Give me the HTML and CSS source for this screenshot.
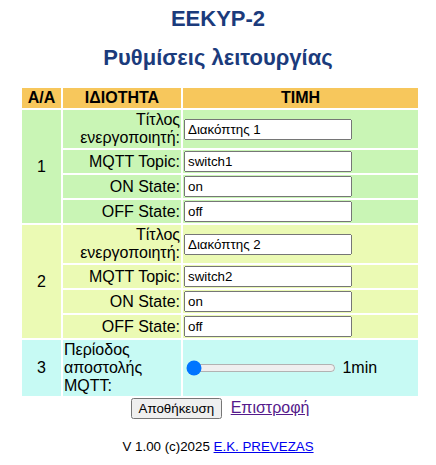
FILE: index.html
```html
<!DOCTYPE html>
<html lang="el">
<head>
<meta charset="utf-8">
<title>EEKYP-2</title>
<link rel="stylesheet" href="styles.css">
</head>
<body>
<h1 class="title">EEKYP-2</h1>
<h2 class="subtitle">Ρυθμίσεις λειτουργίας</h2>
<form class="form">
<table class="cfg">
<colgroup><col class="col-aa"><col class="col-prop"><col class="col-val"></colgroup>
<thead>
<tr><th>A/A</th><th>ΙΔΙΟΤΗΤΑ</th><th>ΤΙΜΗ</th></tr>
</thead>
<tbody>
<tr class="g1"><td rowspan="4" class="num">1</td><td class="prop">Τίτλος ενεργοποιητή:</td><td class="val"><input type="text" class="txt" value="Διακόπτης 1"></td></tr>
<tr class="g1"><td class="prop">MQTT Topic:</td><td class="val"><input type="text" class="txt" value="switch1"></td></tr>
<tr class="g1"><td class="prop">ON State:</td><td class="val"><input type="text" class="txt" value="on"></td></tr>
<tr class="g1"><td class="prop">OFF State:</td><td class="val"><input type="text" class="txt" value="off"></td></tr>
<tr class="g2"><td rowspan="4" class="num">2</td><td class="prop">Τίτλος ενεργοποιητή:</td><td class="val"><input type="text" class="txt" value="Διακόπτης 2"></td></tr>
<tr class="g2"><td class="prop">MQTT Topic:</td><td class="val"><input type="text" class="txt" value="switch2"></td></tr>
<tr class="g2"><td class="prop">ON State:</td><td class="val"><input type="text" class="txt" value="on"></td></tr>
<tr class="g2"><td class="prop">OFF State:</td><td class="val"><input type="text" class="txt" value="off"></td></tr>
<tr class="g3"><td class="num">3</td><td class="prop-left">Περίοδος αποστολής MQTT:</td><td class="val"><input type="range" class="range" min="1" max="60" value="1"> <span class="unit">1min</span></td></tr>
</tbody>
</table>
<div class="actions"><button type="button" class="btn">Αποθήκευση</button> <a href="#" class="back">Επιστροφή</a></div>
</form>
<p class="footer">V 1.00 (c)2025 <a href="#" class="flink">E.K. PREVEZAS</a></p>
</body>
</html>
```
FILE: styles.css
```css
html, body {
  margin: 0;
  padding: 0;
  background: #fff;
}
body {
  padding: 0 8px;
  font-family: "Liberation Sans", Arial, sans-serif;
  font-size: 16px;
  color: #000;
}
.title, .subtitle {
  margin: 0;
  text-align: center;
  font-size: 22px;
  font-weight: bold;
  color: #1b3b7c;
}
.title { padding-top: 6px; }
.subtitle { margin-top: 13px; }
.form { margin: 15px 0 0; }
.cfg {
  width: 400px;
  margin-left: 12px;
  table-layout: fixed;
  border-collapse: separate;
  border-spacing: 2px;
}
.col-aa { width: 39px; }
.col-prop { width: 118px; }
.col-val { width: 235px; }
.cfg th {
  background: #f7c75c;
  font-weight: bold;
  text-align: center;
  padding: 1px;
}
.cfg td { padding: 1px; vertical-align: middle; }
.g1 td { background: #c9f5b5; }
.g2 td { background: #ebfab4; }
.g3 td { background: #c7faf4; }
.num { text-align: center; }
.prop { text-align: right; }
.prop-left { text-align: left; }
.val { text-align: left; }
.txt {
  box-sizing: border-box;
  width: 168px;
  height: 21px;
  margin: 0;
  font-family: "Liberation Sans", Arial, sans-serif;
  font-size: 13.33px;
  vertical-align: middle;
}
.range {
  width: 150px;
  vertical-align: middle;
}
.unit { vertical-align: middle; }
.actions {
  text-align: center;
  padding-left: 4px;
}
.btn {
  font-family: "Liberation Sans", Arial, sans-serif;
  font-size: 13.33px;
}
.back { color: #551a8b; margin-left: 4px; }
.footer {
  margin: 20px 0 0;
  text-align: center;
  font-size: 13.33px;
}
.flink { color: #0000ee; }
```
